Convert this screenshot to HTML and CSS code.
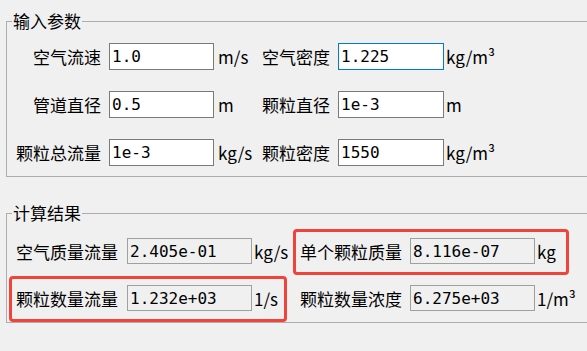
FILE: index.html
```html
<!DOCTYPE html>
<html lang="zh">
<head>
  <meta charset="UTF-8" />
  <meta name="viewport" content="width=device-width, initial-scale=1.0" />
  <title>气力输送计算</title>
  <link rel="stylesheet" href="styles.css">
</head>
<body>

  <fieldset class="group group-input">
    <legend>输入参数</legend>
    <div class="param-grid">
      <label class="lbl">空气流速</label>
      <input class="field" value="1.0">
      <span class="unit">m/s</span>
      <label class="lbl">空气密度</label>
      <input class="field active" value="1.225">
      <span class="unit">kg/m³</span>

      <label class="lbl">管道直径</label>
      <input class="field" value="0.5">
      <span class="unit">m</span>
      <label class="lbl">颗粒直径</label>
      <input class="field" value="1e-3">
      <span class="unit">m</span>

      <label class="lbl">颗粒总流量</label>
      <input class="field" value="1e-3">
      <span class="unit">kg/s</span>
      <label class="lbl">颗粒密度</label>
      <input class="field" value="1550">
      <span class="unit">kg/m³</span>
    </div>
  </fieldset>

  <fieldset class="group group-result">
    <legend>计算结果</legend>
    <div class="result-grid">
      <div class="item">
        <span class="lbl">空气质量流量</span>
        <input class="field readonly" value="2.405e-01" readonly>
        <span class="unit">kg/s</span>
      </div>
      <div class="item mark">
        <span class="lbl">单个颗粒质量</span>
        <input class="field readonly" value="8.116e-07" readonly>
        <span class="unit">kg</span>
      </div>
      <div class="item mark">
        <span class="lbl">颗粒数量流量</span>
        <input class="field readonly" value="1.232e+03" readonly>
        <span class="unit">1/s</span>
      </div>
      <div class="item">
        <span class="lbl">颗粒数量浓度</span>
        <input class="field readonly" value="6.275e+03" readonly>
        <span class="unit">1/m³</span>
      </div>
    </div>
  </fieldset>

</body>
</html>
```

FILE: styles.css
```css
html, body {
  margin: 0;
  padding: 0;
}

body {
  background: #f0f0f0;
  color: #000;
  font-family: "Noto Sans CJK SC", "Noto Sans", sans-serif;
  font-size: 17px;
}

/* window is cut on the right, so the group boxes have no right edge */
.group {
  border: 1px solid #adadad;
  border-right: none;
  margin: 0 0 0 6px;
  padding: 0;
  min-width: 0;
}

.group legend {
  line-height: 24px;
  padding: 0 1px;
}

.group-input {
  margin-top: 9px;
  padding: 0 0 10px 5px;
}

.group-result {
  margin-top: 24px;
  padding: 0 0 0 2px;
}

.group-result legend {
  margin-left: 3px;
}

.param-grid {
  display: grid;
  grid-template-columns: 97px 105px 44px 80px 106px auto;
  grid-auto-rows: 27px;
  row-gap: 21px;
  align-items: center;
  margin-top: 10px;
}

.param-grid .lbl {
  text-align: right;
  padding-right: 8px;
}

.param-grid .unit {
  padding-left: 4px;
}

.param-grid .unit:nth-child(6n) {
  padding-left: 2px;
}

.unit {
  white-space: nowrap;
}

.field {
  box-sizing: border-box;
  height: 27px;
  margin: 0;
  padding: 0 2px;
  border: 1px solid #7a7a7a;
  border-radius: 0;
  background: #fff;
  color: #000;
  font-family: "DejaVu Sans Mono", monospace;
  font-size: 16px;
  outline: none;
}

.field.active {
  border-color: #0078d7;
}

.field.readonly {
  height: 26px;
  background: #f0f0f0;
  border-color: #a0a0a0;
}

.result-grid {
  display: grid;
  grid-template-columns: 278px 276px;
  column-gap: 6px;
  row-gap: 1px;
  margin-top: 4px;
}

.item {
  display: flex;
  align-items: center;
  padding: 6px 0 8px 4px;
  border: 3px solid transparent;
  border-radius: 4px;
}

.item .lbl {
  width: 102px;
  margin-right: 9px;
  white-space: nowrap;
}

.item:nth-child(2n) .lbl {
  margin-right: 8px;
}

.item .field {
  width: 125px;
}

.item .unit {
  margin-left: 2px;
}

.item.mark {
  border-color: #f2433a;
}
```
